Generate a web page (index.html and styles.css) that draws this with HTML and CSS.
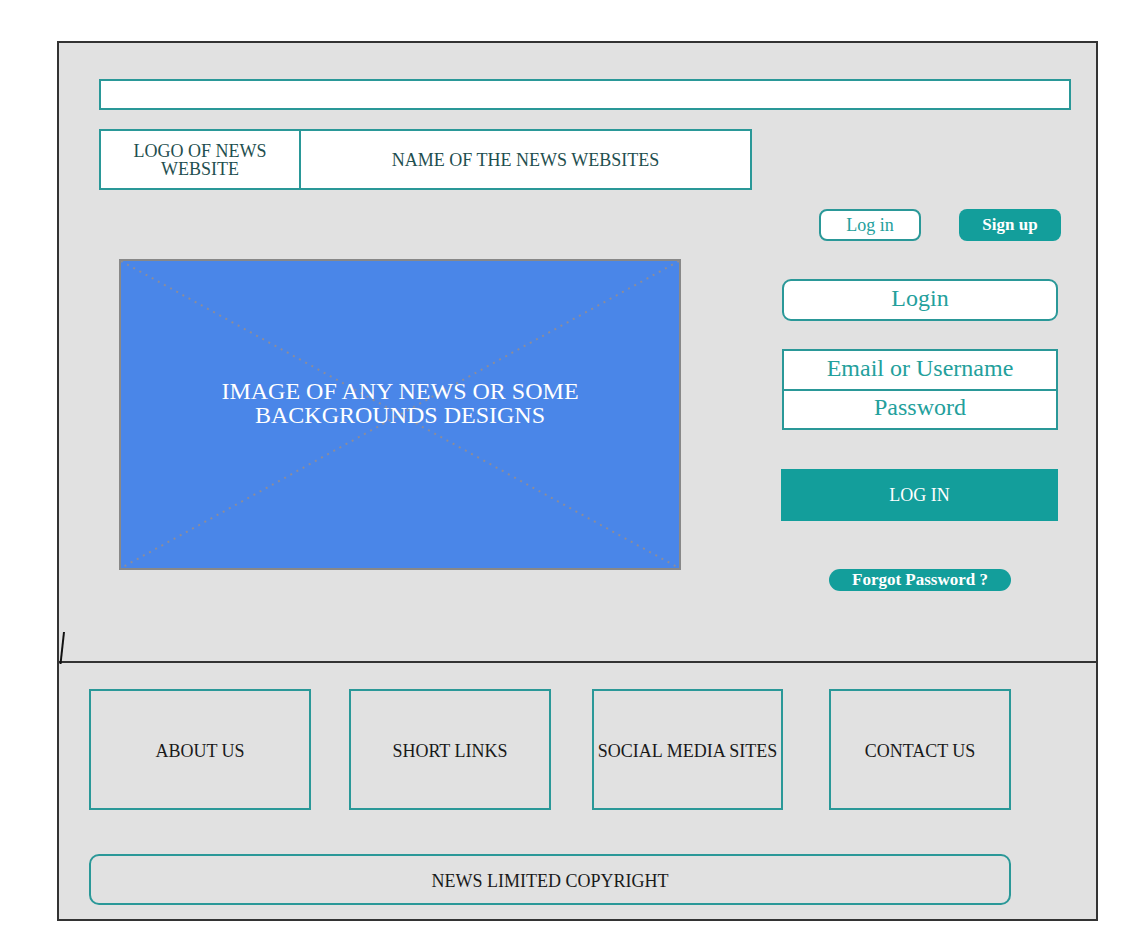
FILE: index.html
```html
<!DOCTYPE html>
<html>
<head>
<meta charset="utf-8">
<link rel="stylesheet" href="styles.css">
</head>
<body>
<div class="frame">
  <svg class="tick" width="8" height="36" viewBox="0 0 8 36"><line x1="5" y1="2" x2="1.5" y2="34" stroke="#111" stroke-width="2"/></svg>
  <section class="top">
    <div class="searchbar"></div>
    <div class="header">
      <div class="logo">LOGO OF NEWS<br>WEBSITE</div>
      <div class="name">NAME OF THE NEWS WEBSITES</div>
    </div>
    <div class="main">
      <div class="hero">
        <svg class="cross" viewBox="0 0 557 307" preserveAspectRatio="none">
          <line x1="0" y1="0" x2="557" y2="307" />
          <line x1="557" y1="0" x2="0" y2="307" />
        </svg>
        <div class="hero-text">IMAGE OF ANY NEWS OR SOME<br>BACKGROUNDS DESIGNS</div>
      </div>
      <div class="side">
        <div class="auth">
          <div class="btn-outline">Log in</div>
          <div class="btn-fill">Sign up</div>
        </div>
        <div class="login-title">Login</div>
        <div class="fields">
          <div class="field">Email or Username</div>
          <div class="field second">Password</div>
        </div>
        <div class="submit">LOG IN</div>
        <div class="forgot">Forgot Password ?</div>
      </div>
    </div>
  </section>
  <section class="bottom">
    <div class="links">
      <div class="link about">ABOUT US</div>
      <div class="link short">SHORT LINKS</div>
      <div class="link social">SOCIAL MEDIA SITES</div>
      <div class="link contact">CONTACT US</div>
    </div>
    <div class="copyright">NEWS LIMITED COPYRIGHT</div>
  </section>
</div>
</body>
</html>
```

FILE: styles.css
```css
* { box-sizing: border-box; }
html, body { margin: 0; padding: 0; background: #ffffff; }
body { font-family: "Liberation Serif", "Times New Roman", serif; }

.frame {
  position: relative;
  margin: 41px 0 0 57px;
  width: 1041px;
  height: 880px;
  border: 2px solid #333333;
  background: #e1e1e1;
}
.tick { position: absolute; left: 0; top: 587px; }

.top { height: 618px; padding: 36px 0 0 40px; }
.searchbar {
  width: 972px; height: 31px;
  background: #fff; border: 2px solid #2a9898;
}
.header { display: flex; margin-top: 19px; height: 61px; }
.logo, .name {
  background: #fff; border: 2px solid #2a9898;
  display: flex; align-items: center; justify-content: center; text-align: center;
  color: #1f4f4f; font-size: 18px; line-height: 18px;
}
.logo { width: 202px; padding-top: 1px; }
.name { width: 451px; border-left: none; }

.main { display: flex; margin-top: 19px; }
.hero {
  position: relative;
  margin-left: 20px; margin-top: 50px;
  width: 562px; height: 311px;
  background: #4a86e8; border: 2px solid #888888;
  display: flex; align-items: center; justify-content: center;
}
.cross { position: absolute; left: 0; top: 0; width: 100%; height: 100%; }
.cross line { stroke: #8c8c9a; stroke-width: 2; stroke-dasharray: 2 5; }
.hero-text {
  position: relative; color: #fff; font-size: 24px; line-height: 24px;
  text-align: center; margin-bottom: 24px;
}

.side { margin-left: 100px; width: 280px; }
.auth { display: flex; justify-content: flex-end; gap: 38px; }
.btn-outline, .btn-fill {
  width: 102px; height: 32px; border-radius: 8px;
  display: flex; align-items: center; justify-content: center; font-size: 18px;
}
.btn-outline { background: #fff; border: 2px solid #2a9898; color: #23a09c; }
.btn-fill { background: #139e9b; color: #fff; font-weight: bold; font-size: 17px; }

.login-title {
  margin: 38px 0 0 1px; width: 276px; height: 42px;
  background: #fff; border: 2px solid #2a9898; border-radius: 9px;
  display: flex; align-items: center; justify-content: center;
  color: #23a09c; font-size: 24px; padding-bottom: 4px;
}
.fields { margin: 28px 0 0 1px; width: 276px; border: 2px solid #2a9898; background: #fff; }
.field {
  height: 38px; display: flex; align-items: center; justify-content: center;
  color: #23a09c; font-size: 24px; padding-bottom: 4px;
}
.field.second { border-top: 2px solid #2a9898; height: 39px; }
.submit {
  margin-top: 39px; width: 277px; height: 52px; background: #139e9b;
  display: flex; align-items: center; justify-content: center;
  color: #fff; font-size: 18px;
}
.forgot {
  margin: 48px 0 0 48px; width: 182px; height: 22px; border-radius: 11px;
  background: #139e9b; color: #fff; font-weight: bold; font-size: 17px;
  display: flex; align-items: center; justify-content: center;
}

.bottom { border-top: 2px solid #333333; padding: 26px 0 0 30px; }
.links { display: flex; }
.link {
  height: 121px; border: 2px solid #2a9898;
  display: flex; align-items: center; justify-content: center;
  color: #1a1a1a; font-size: 18px; white-space: nowrap; padding-top: 3px;
}
.about { width: 222px; }
.short { width: 202px; margin-left: 38px; }
.social { width: 191px; margin-left: 41px; }
.contact { width: 182px; margin-left: 46px; }
.copyright {
  margin-top: 44px; width: 922px; height: 51px;
  border: 2px solid #2a9898; border-radius: 10px;
  display: flex; align-items: center; justify-content: center;
  color: #1a1a1a; font-size: 18px; padding-top: 3px;
}
```
